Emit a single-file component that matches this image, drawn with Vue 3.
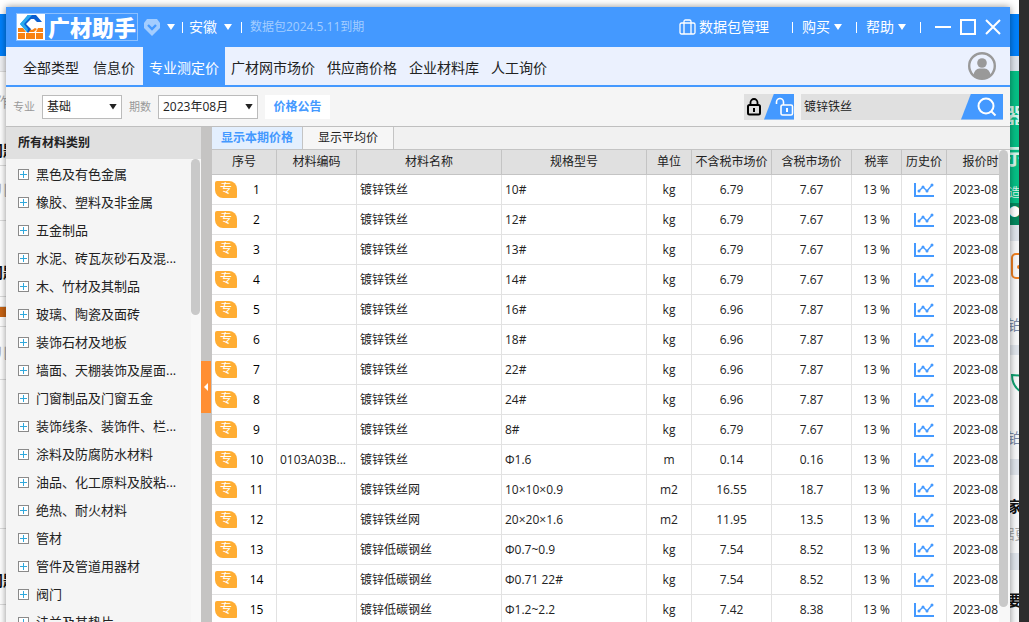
<template>
  <div class="desktop">
    <div class="strip strip-left">
      <div v-for="(b, i) in leftBlocks" :key="i" class="block" :class="b.type" :style="{ height: b.h + 'px' }">
        <span v-if="b.text">{{ b.text }}</span>
      </div>
    </div>

    <div class="window">
      <header class="titlebar">
        <div class="brand">
          <svg class="brand-icon" width="29" height="28" viewBox="0 0 29 28">
            <rect width="29" height="28" fill="#fff" />
            <path d="M2 15h5l3 4H2zM22 15h5v4h-7zM2 20h7v6H2zM10 20h9v6h-9zM20 20h7v6h-7zM11 19l3-3 2 1 3-2 2 1-3 3z" fill="#f98213" />
            <path d="M12 2L4 11l7 8 2-3-4-5 7-9z" fill="#2aa9ee" />
            <path d="M12 2h8l6 7h-5l-3-3h-3l-5 5 5 5-3 4-7-9z" fill="#0b5fd0" />
            <path d="M12 2h4l-8 9 4 5-1 3-7-8z" fill="#2aa9ee" />
          </svg>
          <span class="brand-name">广材助手</span>
        </div>
        <button class="t-btn vip" aria-label="会员">
          <svg width="16" height="17" viewBox="0 0 16 17">
            <path d="M3 0h10l3 4v5l-8 8-8-8V4z" fill="#a3cdff" />
            <path d="M4 6l4 4 4-4" fill="none" stroke="#4499ff" stroke-width="2.4" />
          </svg>
          <i class="caret"></i>
        </button>
        <i class="sep"></i>
        <button class="t-btn province">安徽<i class="caret"></i></button>
        <i class="sep"></i>
        <span class="expire">数据包2024.5.11到期</span>

        <div class="title-right">
          <button class="t-btn pack">
            <svg width="17" height="16" viewBox="0 0 17 16" fill="none" stroke="#fff" stroke-width="1.3">
              <rect x="1" y="4" width="15" height="11" rx="1.5" />
              <path d="M5 15V2.500q0-1.500 1.500-1.500h4q1.500 0 1.500 1.500V15" />
            </svg>
            数据包管理
          </button>
          <i class="sep"></i>
          <button class="t-btn menu">购买<i class="caret"></i></button>
          <i class="sep"></i>
          <button class="t-btn menu">帮助<i class="caret"></i></button>
          <i class="sep"></i>
          <div class="win-btns">
            <button class="t-btn" aria-label="最小化">
              <svg width="16" height="16"><path d="M0 8h16" stroke="#fff" stroke-width="2" /></svg>
            </button>
            <button class="t-btn" aria-label="最大化">
              <svg width="16" height="16"><rect x="1" y="1" width="14" height="14" fill="none" stroke="#fff" stroke-width="2" /></svg>
            </button>
            <button class="t-btn" aria-label="关闭">
              <svg width="16" height="16"><path d="M1 1l14 14M15 1L1 15" stroke="#fff" stroke-width="2" /></svg>
            </button>
          </div>
        </div>
      </header>

      <nav class="nav">
        <div class="nav-main">
          <a v-for="n in mainNav" :key="n" href="#" :class="{ active: n === currentNav }" @click.prevent="currentNav = n">{{ n }}</a>
        </div>
        <a v-for="n in moreNav" :key="n" href="#" :class="{ active: n === currentNav }" @click.prevent="currentNav = n">{{ n }}</a>
        <button class="avatar" aria-label="用户">
          <svg width="28" height="28" viewBox="0 0 28 28">
            <circle cx="14" cy="14" r="12.800" fill="#ebf1fe" stroke="#999" stroke-width="2.400" />
            <circle cx="14" cy="11" r="4.800" fill="#999" />
            <path d="M5.500 23q1-6 6-6.500h5q5 .5 6 6.500-4 4-8.500 4T5.500 23z" fill="#999" />
          </svg>
        </button>
      </nav>

      <div class="toolbar">
        <label for="major">专业</label>
        <div class="select-box major">
          <select id="major" v-model="major">
            <option>基础</option>
          </select>
          <i class="caret dark"></i>
        </div>
        <label for="period">期数</label>
        <div class="select-box period">
          <select id="period" v-model="period">
            <option>2023年08月</option>
          </select>
          <i class="caret dark"></i>
        </div>
        <button class="notice">价格公告</button>

        <div class="lock-group">
          <button class="lock" aria-label="锁定">
            <svg width="16" height="18" viewBox="0 0 16 18" fill="none" stroke="#000">
              <rect x="2" y="7" width="12" height="9.500" rx="1.500" stroke-width="2" />
              <path d="M4.500 7V4.500a3.500 3.500 0 0 1 7 0V7" stroke-width="1.800" />
              <path d="M8 10v4" stroke-width="2" />
            </svg>
          </button>
          <button class="unlock" aria-label="解锁">
            <svg width="19" height="20" viewBox="0 0 19 20" fill="none" stroke="#fff">
              <rect x="6" y="8" width="11.500" height="10" rx="1.500" stroke-width="1.600" />
              <path d="M1.500 7V5a3.500 3.500 0 0 1 7 0v3" stroke-width="1.600" />
              <path d="M12 11v4" stroke-width="2" />
            </svg>
          </button>
        </div>
        <form class="search" @submit.prevent>
          <input v-model="keyword" type="text" aria-label="搜索材料" />
          <button type="submit" aria-label="搜索">
            <svg width="20" height="20" viewBox="0 0 20 20" fill="none" stroke="#fff" stroke-width="2">
              <circle cx="9" cy="9" r="7.500" />
              <path d="M14.500 14.500l4 4" />
            </svg>
          </button>
        </form>
      </div>

      <div class="body">
        <aside class="sidebar">
          <h2>所有材料类别</h2>
          <div class="tree">
            <ul>
              <li v-for="c in categories" :key="c">
                <button>
                  <svg width="11" height="11">
                    <rect x="0.500" y="0.500" width="10" height="10" fill="#fff" stroke="#8a8a8a" />
                    <path d="M2 5.500h7M5.500 2v7" stroke="#2fa8dc" />
                  </svg>
                  {{ c }}
                </button>
              </li>
            </ul>
            <div class="scroll"><div class="thumb side-thumb"></div></div>
          </div>
        </aside>

        <div class="splitter">
          <button aria-label="收起">
            <svg width="4" height="8"><path d="M4 0v8L0 4z" fill="#fff" /></svg>
          </button>
        </div>

        <main class="main">
          <div class="sub-tabs">
            <button :class="{ active: !average }" @click="average = false">显示本期价格</button>
            <button :class="{ active: average }" @click="average = true">显示平均价</button>
          </div>
          <div class="grid">
            <div class="table-wrap">
              <table>
                <colgroup>
                  <col class="w65" />
                  <col class="w80" />
                  <col />
                  <col />
                  <col class="w45" />
                  <col class="w80" />
                  <col class="w80" />
                  <col class="w50" />
                  <col class="w45" />
                  <col class="w80" />
                </colgroup>
                <thead>
                  <tr>
                    <th v-for="h in heads" :key="h">{{ h }}</th>
                  </tr>
                </thead>
                <tbody>
                  <tr v-for="(r, i) in rows" :key="i">
                    <td>
                      <div class="seq">
                        <span class="badge">专</span>
                        <span class="no">{{ i + 1 }}</span>
                      </div>
                    </td>
                    <td class="left">{{ r.code }}</td>
                    <td class="left">{{ r.name }}</td>
                    <td class="left">{{ r.spec }}</td>
                    <td>{{ r.unit }}</td>
                    <td>{{ r.net }}</td>
                    <td>{{ r.gross }}</td>
                    <td>13 %</td>
                    <td>
                      <button class="chart" aria-label="历史价">
                        <svg width="20" height="14" viewBox="0 0 20 14" fill="none" stroke="#4499ff">
                          <path d="M1 0v13h19" stroke-width="2" />
                          <path d="M5 8l4-4 4 4 5-6" stroke-width="1.300" />
                          <g fill="#4499ff" stroke="none">
                            <circle cx="5" cy="8" r="1.500" />
                            <circle cx="9" cy="4" r="1.500" />
                            <circle cx="13" cy="8" r="1.500" />
                            <circle cx="18" cy="2" r="1.500" />
                          </g>
                        </svg>
                      </button>
                    </td>
                    <td class="date">2023-08</td>
                  </tr>
                </tbody>
              </table>
            </div>
            <div class="scroll main-scroll"><div class="thumb main-thumb"></div></div>
          </div>
        </main>
      </div>
    </div>

    <div class="strip strip-right">
      <div v-for="(b, i) in rightBlocks" :key="i" class="block" :class="b.type" :style="{ height: b.h + 'px' }">
        <svg v-if="b.type === 'orange'" width="12" height="26" fill="none" stroke="#f08020" stroke-width="2">
          <rect x="2" y="1" width="24" height="24" rx="4" />
          <circle cx="9" cy="14" r="1" />
        </svg>
        <svg v-else-if="b.type === 'leaf'" width="12" height="20" fill="none" stroke="#10a070" stroke-width="2">
          <path d="M14 2L2 1q0 12 10 17" />
        </svg>
        <span v-else-if="b.text">{{ b.text }}</span>
      </div>
    </div>
    <div class="edge"></div>
  </div>
</template>

<script setup>
import { ref } from 'vue'

const mainNav = ['全部类型', '信息价', '专业测定价']
const moreNav = ['广材网市场价', '供应商价格', '企业材料库', '人工询价']
const currentNav = ref('专业测定价')

const major = ref('基础')
const period = ref('2023年08月')
const keyword = ref('镀锌铁丝')
const average = ref(false)

const categories = [
  '黑色及有色金属',
  '橡胶、塑料及非金属',
  '五金制品',
  '水泥、砖瓦灰砂石及混...',
  '木、竹材及其制品',
  '玻璃、陶瓷及面砖',
  '装饰石材及地板',
  '墙面、天棚装饰及屋面...',
  '门窗制品及门窗五金',
  '装饰线条、装饰件、栏...',
  '涂料及防腐防水材料',
  '油品、化工原料及胶粘...',
  '绝热、耐火材料',
  '管材',
  '管件及管道用器材',
  '阀门',
  '法兰及其垫片'
]

const heads = ['序号', '材料编码', '材料名称', '规格型号', '单位', '不含税市场价', '含税市场价', '税率', '历史价', '报价时间']

const row = (name, spec, unit, net, gross, code = '') => ({ name, spec, unit, net, gross, code })
const rows = [
  row('镀锌铁丝', '10#', 'kg', '6.79', '7.67'),
  row('镀锌铁丝', '12#', 'kg', '6.79', '7.67'),
  row('镀锌铁丝', '13#', 'kg', '6.79', '7.67'),
  row('镀锌铁丝', '14#', 'kg', '6.79', '7.67'),
  row('镀锌铁丝', '16#', 'kg', '6.96', '7.87'),
  row('镀锌铁丝', '18#', 'kg', '6.96', '7.87'),
  row('镀锌铁丝', '22#', 'kg', '6.96', '7.87'),
  row('镀锌铁丝', '24#', 'kg', '6.96', '7.87'),
  row('镀锌铁丝', '8#', 'kg', '6.79', '7.67'),
  row('镀锌铁丝', 'Φ1.6', 'm', '0.14', '0.16', '0103A03B...'),
  row('镀锌铁丝网', '10×10×0.9', 'm2', '16.55', '18.7'),
  row('镀锌铁丝网', '20×20×1.6', 'm2', '11.95', '13.5'),
  row('镀锌低碳钢丝', 'Φ0.7~0.9', 'kg', '7.54', '8.52'),
  row('镀锌低碳钢丝', 'Φ0.71 22#', 'kg', '7.54', '8.52'),
  row('镀锌低碳钢丝', 'Φ1.2~2.2', 'kg', '7.42', '8.38')
]

// slices of the browser page behind the window
const leftBlocks = [
  { h: 14 },
  { h: 42, type: 'blue' },
  { h: 16, type: 'pale' },
  { h: 20 },
  { h: 20, type: 'soft', text: '作' },
  { h: 28 },
  { h: 20, type: 'bold', text: '问题' },
  { h: 6, type: 'line' },
  { h: 14 },
  { h: 20, type: 'soft', text: '儿' },
  { h: 21, type: 'line' },
  { h: 41 },
  { h: 20, type: 'bold', text: '问题' },
  { h: 15, type: 'line' },
  { h: 10, type: 'line' },
  { h: 10, type: 'photo' },
  { h: 10, type: 'line' },
  { h: 16 },
  { h: 20, type: 'soft', text: '儿' },
  { h: 17, type: 'line' },
  { h: 149, type: 'line' },
  { h: 41 },
  { h: 20, type: 'bold', text: '问题' },
  { h: 15, type: 'line' },
  { h: 30 }
]

const rightBlocks = [
  { h: 14 },
  { h: 42, type: 'blue' },
  { h: 15, type: 'gap' },
  { h: 34, type: 'green' },
  { h: 20, type: 'green big', text: '器' },
  { h: 20, type: 'green' },
  { h: 30, type: 'green big', text: '示' },
  { h: 8, type: 'green' },
  { h: 20, type: 'green', text: '造' },
  { h: 22, type: 'deep', text: '●' },
  { h: 16, type: 'gap' },
  { h: 12, type: 'card' },
  { h: 26, type: 'orange' },
  { h: 36, type: 'card' },
  { h: 20, type: 'slate', text: '铂' },
  { h: 10, type: 'card' },
  { h: 10, type: 'gap' },
  { h: 19, type: 'card' },
  { h: 20, type: 'leaf' },
  { h: 34, type: 'card' },
  { h: 20, type: 'slate', text: '铂' },
  { h: 11, type: 'card' },
  { h: 16, type: 'gap' },
  { h: 21, type: 'card' },
  { h: 20, type: 'bold', text: '家' },
  { h: 8, type: 'card' },
  { h: 20, type: 'soft', text: '据更' },
  { h: 9, type: 'card' },
  { h: 17, type: 'gap' },
  { h: 20, type: 'card' },
  { h: 20, type: 'bold', text: '要' },
  { h: 20, type: 'card' }
]
</script>

<style>
body {
  margin: 0;
  background: #fff;
}
</style>

<style scoped>
.desktop {
  display: flex;
  height: 100vh;
  overflow: hidden;
  font-family: "Open Sans", "Noto Sans CJK SC", sans-serif;
  font-size: 12px;
  line-height: 20px;
  color: #222;
}
.desktop * {
  box-sizing: border-box;
}
button, input, select {
  font: inherit;
  color: inherit;
  margin: 0;
  padding: 0;
  border: 0;
  background: none;
}
button {
  cursor: pointer;
}
svg {
  display: block;
  flex: none;
}

/* page behind */
.strip {
  overflow: hidden;
  background: #fff;
}
.strip-left {
  flex: 0 0 6px;
}
.strip-right {
  flex: 0 0 9px;
}
.edge {
  flex: 0 0 10px;
  background: #2d2d2d;
}
.block {
  display: flex;
  justify-content: center;
  overflow: hidden;
  white-space: nowrap;
}
.block span {
  flex: none;
}
.blue { background: #0080fb; }
.pale { background: #f0f1f4; border-bottom: 1px solid #ddd; }
.line { border-bottom: 1px solid #ddd; }
.soft { color: #aaa; font-size: 14px; }
.bold { color: #111; font-size: 15px; font-weight: bold; }
.photo { background: #c86414; }
.gap { background: #dfe4eb; }
.green { background: #06bf85; color: #d5f5ea; }
.big { font-size: 22px; font-weight: bold; }
.deep { background: #03875d; color: #fff; }
.slate { color: #7c8ba8; font-size: 14px; }
.strip-right .card, .strip-right .slate, .strip-right .bold, .strip-right .soft,
.strip-right .orange, .strip-right .leaf {
  background: #f7f8f9;
}
.strip-right .orange, .strip-right .leaf {
  justify-content: flex-start;
}

.window {
  position: relative;
  display: flex;
  flex-direction: column;
  flex: 1;
  min-width: 0;
  height: calc(100vh + 18px);
  margin-top: 7px;
  background: #f5f5f5;
  box-shadow: 0 0 7px rgba(0, 0, 0, 0.45);
}

/* title bar */
.titlebar {
  display: flex;
  align-items: center;
  flex: 0 0 40px;
  padding: 0 9px 0 10px;
  background: #4499ff;
  color: #fff;
  font-size: 14px;
  white-space: nowrap;
}
.brand {
  display: flex;
  align-items: center;
  width: 122px;
  height: 28px;
  outline: 1px solid #8cc0ff;
  outline-offset: -1px;
}
.brand-name {
  padding-left: 3px;
  font-size: 22px;
  font-weight: 900;
  line-height: 28px;
}
.t-btn {
  display: flex;
  align-items: center;
}
.caret {
  width: 8px;
  height: 6px;
  background: #fff;
  clip-path: polygon(0 0, 100% 0, 50% 100%);
}
.caret.dark {
  background: #222;
}
.sep {
  width: 1px;
  height: 11px;
  background: #fff;
}
.vip {
  gap: 7px;
  margin: 0 7px 0 6px;
}
.province {
  gap: 7px;
  margin: 0 9px 0 6px;
}
.expire {
  margin-left: 8px;
  color: #a3cdff;
  font-size: 12px;
}
.title-right {
  display: flex;
  align-items: center;
  margin-left: auto;
}
.pack {
  gap: 3px;
  margin-right: 23px;
}
.menu {
  gap: 4px;
  margin: 0 14px 0 9px;
}
.win-btns {
  display: flex;
  gap: 9px;
  margin-left: 14px;
}

/* nav */
.nav {
  display: flex;
  flex: 0 0 40px;
  padding: 0 14px 0 11px;
  border-bottom: 2px solid #4499ff;
  background: #ebf1fe;
  font-size: 14px;
}
.nav-main {
  display: flex;
  gap: 2px;
}
.nav a {
  padding: 4px 6px 0;
  color: #222;
  line-height: 34px;
  text-decoration: none;
  white-space: nowrap;
}
.nav a.active {
  background: #4499ff;
  color: #fff;
}
.avatar {
  align-self: center;
  margin-left: auto;
}

/* toolbar */
.toolbar {
  display: flex;
  align-items: center;
  flex: 0 0 40px;
  padding: 0 7px;
  border-bottom: 1px solid #bfbfbf;
}
.toolbar label {
  width: 29px;
  color: #999;
  font-size: 11px;
}
.select-box {
  position: relative;
  margin-right: 7px;
}
.select-box.major {
  width: 80px;
}
.select-box.period {
  width: 100px;
}
.select-box select {
  appearance: none;
  display: block;
  width: 100%;
  height: 24px;
  padding: 0 4px;
  border: 1px solid #bbb;
  border-radius: 0;
  background: #fff;
}
.select-box .caret {
  position: absolute;
  top: 9px;
  right: 5px;
  pointer-events: none;
}
.notice {
  width: 65px;
  height: 24px;
  background: #fff;
  color: #4499ff;
  font-weight: bold;
}
.lock-group {
  display: flex;
  width: 50px;
  height: 26px;
  margin: 0 7px 0 auto;
  background: #e0e0e0;
}
.lock {
  padding-left: 2px;
  width: 20px;
}
.unlock {
  display: flex;
  align-items: center;
  justify-content: flex-end;
  width: 30px;
  background: #4499ff;
  clip-path: polygon(10px 0, 100% 0, 100% 100%, 0 100%);
}
.search {
  display: flex;
  width: 202px;
  height: 26px;
  background: #e0e0e0;
}
.search input {
  flex: 1;
  min-width: 0;
  padding: 0 3px;
  outline: none;
}
.search button {
  display: flex;
  align-items: center;
  justify-content: center;
  width: 42px;
  padding-left: 10px;
  background: #4499ff;
  clip-path: polygon(10px 0, 100% 0, 100% 100%, 0 100%);
}

.body {
  display: flex;
  flex: 1;
  min-height: 0;
}

/* sidebar */
.sidebar {
  display: flex;
  flex-direction: column;
  flex: 0 0 195px;
}
.sidebar h2 {
  margin: 0;
  padding: 0 12px;
  background: #e0e0e0;
  font-size: 12px;
  line-height: 32px;
}
.tree {
  display: flex;
  flex: 1;
  min-height: 0;
}
.tree ul {
  flex: 1;
  margin: 0;
  padding: 1px 0 0 12px;
  list-style: none;
  overflow: hidden;
}
.tree li button {
  display: flex;
  align-items: center;
  gap: 7px;
  height: 28px;
  font-size: 13px;
  white-space: nowrap;
}
.scroll {
  flex: 0 0 10px;
  background: #f8f8f8;
}
.thumb {
  width: 9px;
  border-radius: 5px;
  background: #c9c9c9;
}
.side-thumb {
  height: 32%;
}
.splitter {
  display: flex;
  align-items: center;
  flex: 0 0 11px;
  background: #c5c4c3;
}
.splitter button {
  display: flex;
  align-items: center;
  justify-content: center;
  width: 10px;
  height: 52px;
  background: #ff8f33;
}

/* main */
.main {
  display: flex;
  flex-direction: column;
  flex: 1;
  min-width: 0;
  background: #fff;
}
.sub-tabs {
  display: flex;
  flex: 0 0 23px;
  border-bottom: 1px solid #c4c4c4;
  background: #f1f1f1;
}
.sub-tabs button {
  width: 91px;
  border-right: 1px solid #c4c4c4;
  background: #f6f6f6;
}
.sub-tabs button.active {
  background: #e3effe;
  color: #4499ff;
  font-weight: bold;
}
.grid {
  display: flex;
  flex: 1;
  min-height: 0;
}
.table-wrap {
  flex: 1;
  min-width: 0;
  overflow: hidden;
}
.main-scroll {
  flex-basis: 11px;
}
.main-thumb {
  height: 92%;
}
table {
  width: calc(100% + 28px);
  table-layout: fixed;
  border-collapse: separate;
  border-spacing: 0;
}
.w45 { width: 45px; }
.w50 { width: 50px; }
.w65 { width: 65px; }
.w80 { width: 80px; }
th, td {
  padding: 0;
  border-right: 1px solid #e2e2e2;
  border-bottom: 1px solid #e2e2e2;
  text-align: center;
  white-space: nowrap;
  overflow: hidden;
}
th {
  height: 25px;
  border-color: #c4c4c4;
  background: #e0e0e0;
  font-weight: normal;
}
td {
  height: 30px;
}
td.left {
  padding-left: 3px;
  text-align: left;
}
td.date {
  padding-left: 6px;
  text-align: left;
}
.seq {
  display: flex;
  align-items: center;
  padding-left: 3px;
  color: #000;
}
.badge {
  width: 22px;
  height: 17px;
  border-radius: 2px 8px 1px 8px;
  background: #ffad33;
  color: #fff;
  line-height: 16px;
}
.no {
  width: 39px;
}
.chart {
  display: block;
  margin: 0 auto;
}
</style>
